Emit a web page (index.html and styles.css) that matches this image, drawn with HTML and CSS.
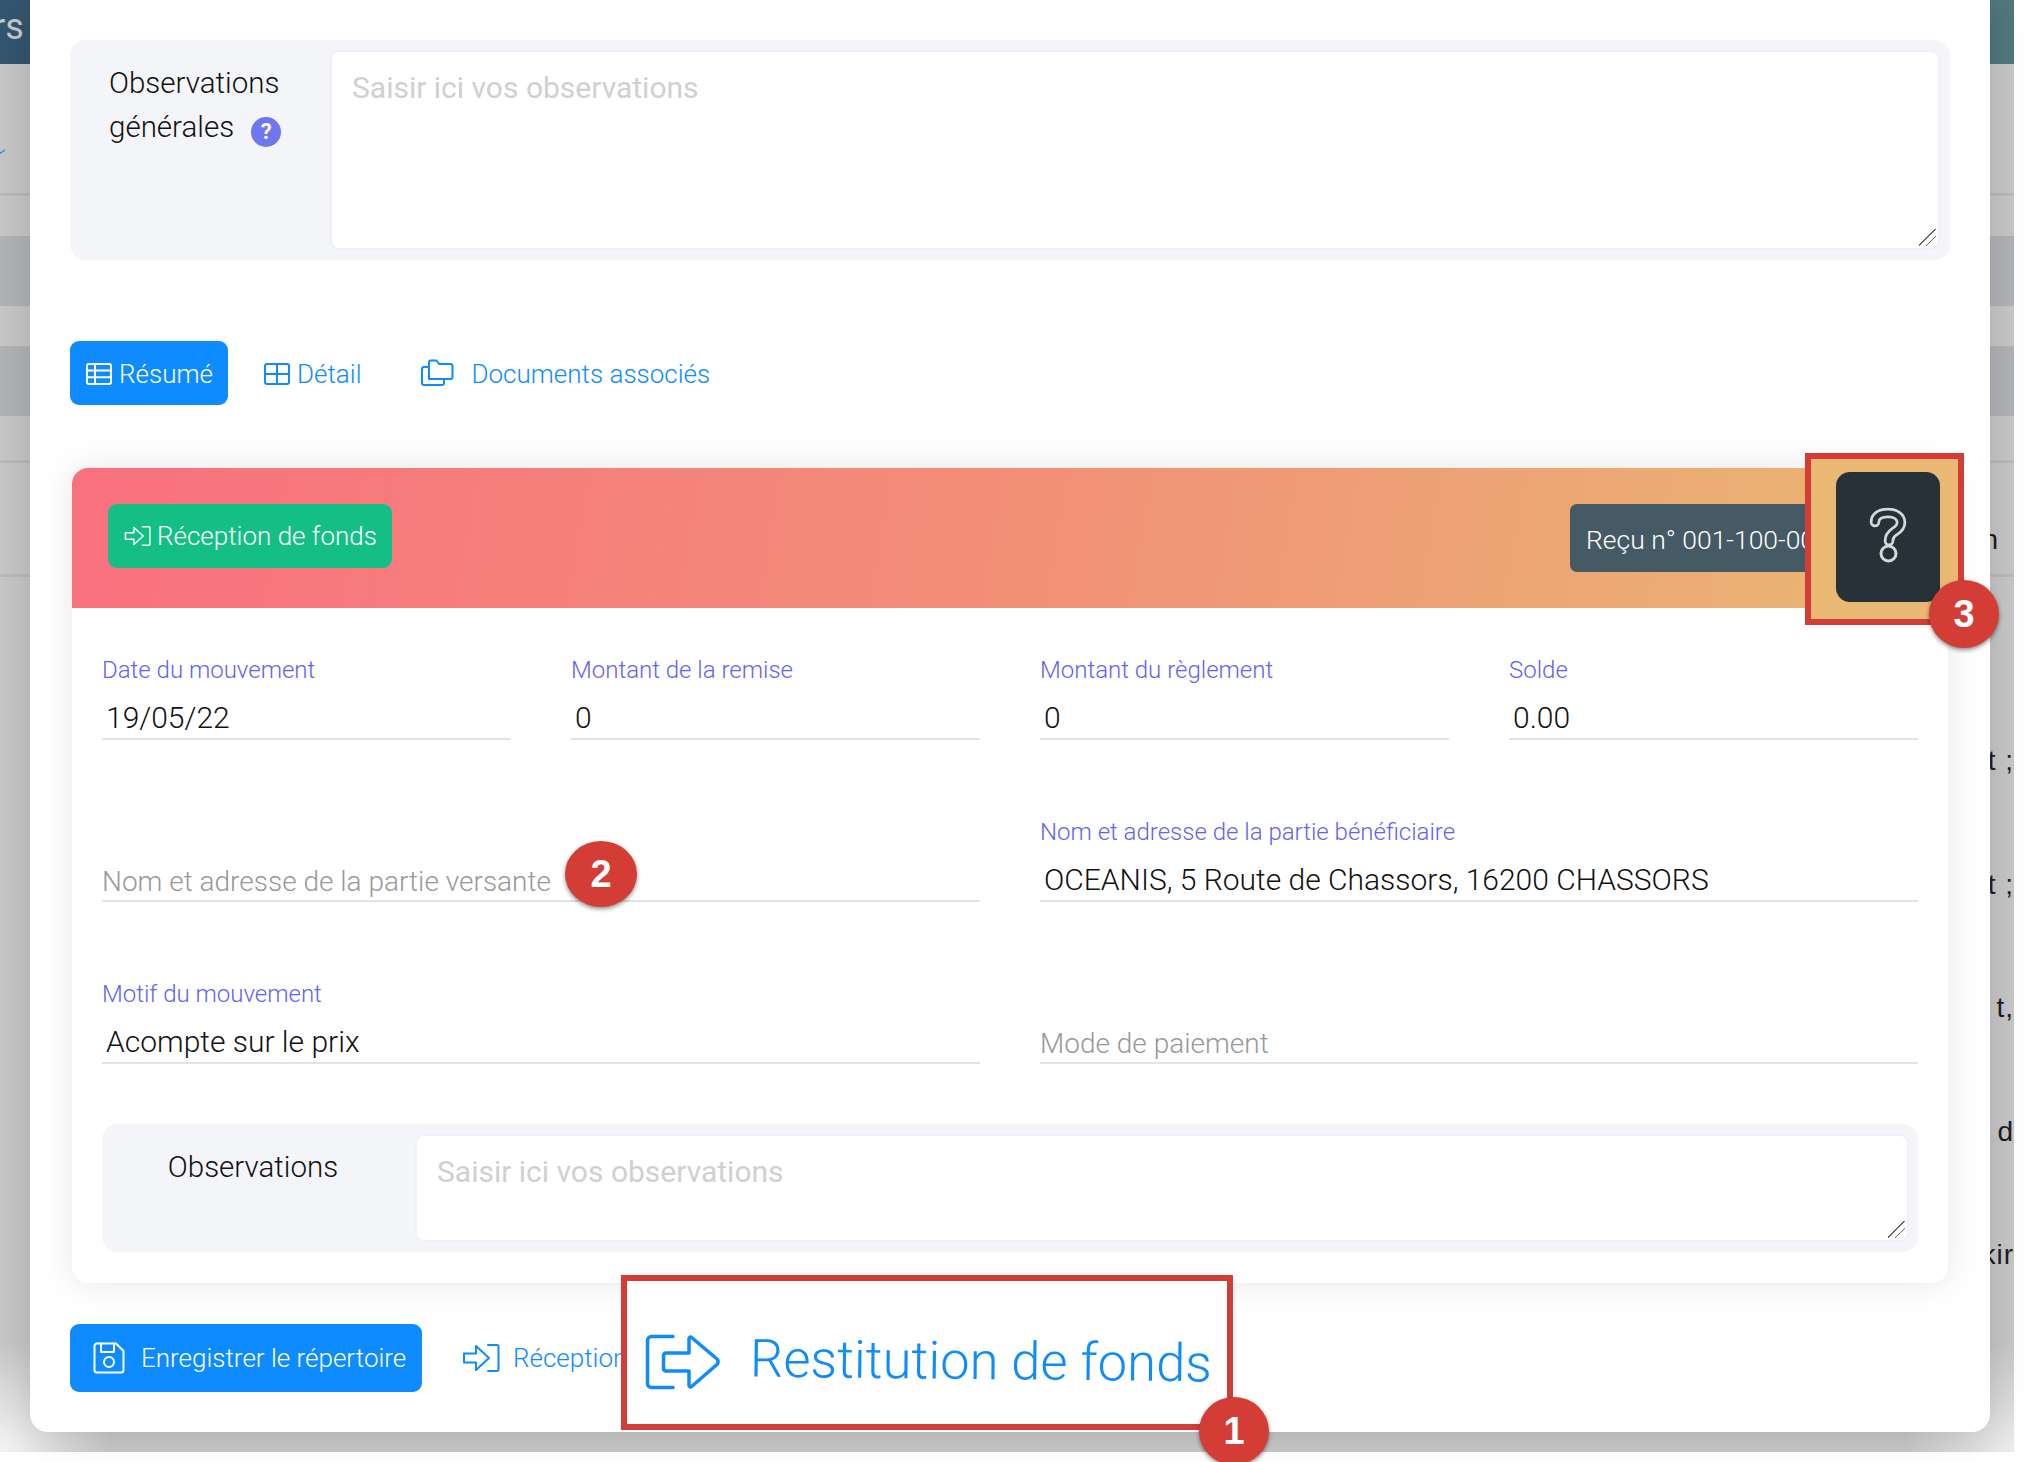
FILE: index.html
```html
<!DOCTYPE html>
<html lang="fr">
<head>
<meta charset="utf-8">
<title>Répertoire</title>
<link rel="stylesheet" href="styles.css">
</head>
<body>
<div class="backdrop">
  <div class="bg-header"><span class="bg-header-text">rs T</span></div>
  <div class="bg-row bg-row-a"><svg class="bg-check" width="8" height="8" viewBox="0 0 8 8"><path d="M0 5 L6 1" fill="none" stroke="#2c8fe8" stroke-width="1.5"/></svg></div>
  <div class="bg-row bg-row-b"></div>
  <div class="bg-row bg-row-dark"></div>
  <div class="bg-row bg-row-b"></div>
  <div class="bg-row bg-row-dark"></div>
  <div class="bg-row bg-row-c"></div>
  <div class="bg-row bg-row-d"><span class="bg-frag">n</span></div>
  <div class="bg-lines">
    <span class="bg-line">t ;</span>
    <span class="bg-line">t ;</span>
    <span class="bg-line">t,</span>
    <span class="bg-line">n d</span>
    <span class="bg-line">kir</span>
  </div>
  <div class="bg-fade"></div>
</div>

<main class="modal">
  <section class="obs obs-general">
    <div class="obs-label">Observations<br>générales <span class="help">?</span></div>
    <div class="ta ta-general">Saisir ici vos observations</div>
  </section>

  <nav class="tabs">
    <a class="tab tab-active">
      <svg class="ic ic-table" viewBox="0 0 26 22"><rect x="1" y="1" width="24" height="20" rx="2"/><path d="M1 7.600H25M1 14.300H25M9 1V21"/></svg>Résumé
    </a>
    <a class="tab tab-detail">
      <svg class="ic ic-table" viewBox="0 0 26 22"><rect x="1" y="1" width="24" height="20" rx="2"/><path d="M1 11H25M13 1V21"/></svg>Détail
    </a>
    <a class="tab tab-docs">
      <svg class="ic ic-docs" viewBox="0 0 33 27"><path d="M8 20V3.500a2 2 0 0 1 2-2h5.500l2.500 3.500h11.500a2 2 0 0 1 2 2V18a2 2 0 0 1-2 2Z"/><path d="M8 8H3a2 2 0 0 0-2 2V24a2 2 0 0 0 2 2H21a2 2 0 0 0 2-2V20"/></svg>Documents associés
    </a>
  </nav>

  <article class="card">
    <header class="card-head">
      <a class="btn-green">
        <svg class="ic ic-in-sm" viewBox="0 0 38 30"><path d="M2 10.500H14V3L27 15 14 27V19.500H2Z"/><path d="M26 2H35a1.500 1.500 0 0 1 1.500 1.500V26.500A1.500 1.500 0 0 1 35 28H26"/></svg>Réception de fonds
      </a>
      <a class="btn-receipt">Reçu n° 001-100-0001</a>
      <div class="callout callout-help">
        <div class="btn-dark">
          <svg class="ic-q" viewBox="0 0 40 56">
            <path class="q-out" d="M7 15C7 9 12 6 20 6 28 6 33 10 33 15.500 33 21 29 23 26 25 23 27 21 29 21 34"/>
            <path class="q-in" d="M7 15C7 9 12 6 20 6 28 6 33 10 33 15.500 33 21 29 23 26 25 23 27 21 29 21 34"/>
            <circle class="q-dot" cx="20.500" cy="46.500" r="7.500"/>
          </svg>
        </div>
        <span class="badge badge-3">3</span>
      </div>
    </header>

    <div class="card-body">
      <div class="grid grid-4">
        <div class="field"><label class="f-label">Date du mouvement</label><div class="f-value">19/05/22</div></div>
        <div class="field"><label class="f-label">Montant de la remise</label><div class="f-value">0</div></div>
        <div class="field"><label class="f-label">Montant du règlement</label><div class="f-value">0</div></div>
        <div class="field"><label class="f-label">Solde</label><div class="f-value">0.00</div></div>
      </div>
      <div class="grid grid-2">
        <div class="field field-empty"><div class="f-value f-ph">Nom et adresse de la partie versante</div><span class="badge badge-2">2</span></div>
        <div class="field"><label class="f-label">Nom et adresse de la partie bénéficiaire</label><div class="f-value">OCEANIS, 5 Route de Chassors, 16200 CHASSORS</div></div>
      </div>
      <div class="grid grid-2">
        <div class="field"><label class="f-label">Motif du mouvement</label><div class="f-value">Acompte sur le prix</div></div>
        <div class="field field-empty"><div class="f-value f-ph">Mode de paiement</div></div>
      </div>
      <section class="obs obs-card">
        <div class="obs-label obs-label-card">Observations</div>
        <div class="ta ta-card">Saisir ici vos observations</div>
      </section>
    </div>
  </article>

  <footer class="foot">
    <a class="btn-save">
      <svg class="ic ic-save" viewBox="0 0 32 32"><path d="M3 1.500H23L30.500 9V28A2.500 2.500 0 0 1 28 30.500H4A2.500 2.500 0 0 1 1.500 28V4A2.500 2.500 0 0 1 3 1.500Z"/><path d="M8 1.500V10H21V1.500"/><circle cx="16" cy="20" r="5"/></svg>Enregistrer le répertoire
    </a>
    <a class="foot-link">
      <svg class="ic ic-in" viewBox="0 0 38 30"><path d="M2 10.500H14V3L27 15 14 27V19.500H2Z"/><path d="M26 2H35a1.500 1.500 0 0 1 1.500 1.500V26.500A1.500 1.500 0 0 1 35 28H26"/></svg>Réception de fonds
    </a>
    <div class="callout callout-rest">
      <svg class="ic ic-out" viewBox="0 0 76 56"><path d="M28 2.500H6.500a4 4 0 0 0-4 4V49.500a4 4 0 0 0 4 4H28"/><path d="M21 19H44V4.500a1.500 1.500 0 0 1 2.600-1L72 25a4 4 0 0 1 0 5.500L46.600 52.500a1.500 1.500 0 0 1-2.600-1V37H21a2.500 2.500 0 0 1-2.500-2.500V21.500A2.500 2.500 0 0 1 21 19Z"/></svg>
      <span class="rest-text">Restitution de fonds</span>
      <span class="badge badge-1">1</span>
    </div>
  </footer>
</main>
</body>
</html>
```

FILE: styles.css
```css
* { box-sizing: border-box; }
html, body { margin: 0; padding: 0; background: #fff; }
body { width: 2038px; height: 1462px; overflow: hidden; position: relative; font-family: Roboto, "Liberation Sans", sans-serif; color: #212529; }

/* Dimmed page behind the modal */
.backdrop { width: 2014px; height: 1452px; background: #c6c6c6; position: relative; overflow: hidden; display: flex; flex-direction: column; }
.bg-header { height: 64px; flex: none; background: linear-gradient(90deg, #34556f, #50787a); color: #c3cbd1; font-size: 36px; line-height: 54px; white-space: nowrap; }
.bg-header-text { display: block; margin-left: -7px; word-spacing: -2px; }
.bg-row { flex: none; position: relative; }
.bg-row-a { height: 132px; border-bottom: 3px solid #b9b9b9; }
.bg-row-b { height: 40px; }
.bg-row-dark { height: 70px; background: #b0b2b6; }
.bg-row-c { height: 47px; border-bottom: 3px solid #b9b9b9; }
.bg-row-d { height: 114px; border-bottom: 3px solid #b9b9b9; }
.bg-check { position: absolute; left: -1px; top: 85px; }
.bg-frag { position: absolute; right: 16px; top: 63px; font: 28px/1 "Liberation Sans", sans-serif; color: #1d1d1d; }
.bg-lines { display: flex; flex-direction: column; align-items: flex-end; padding-top: 168px; }
.bg-line { height: 123.500px; font: 28px/32px "Liberation Sans", sans-serif; letter-spacing: 1px; color: #1d1d1d; white-space: nowrap; }
.bg-fade { position: absolute; inset: 0; background: radial-gradient(circle at 0 100%, #f4f4f4 0, rgba(244,244,244,0) 110px), radial-gradient(circle at 100% 100%, #ececec 0, rgba(236,236,236,0) 110px); }

/* Modal */
.modal { position: absolute; left: 30px; top: 0; width: 1960px; height: 1432px; background: #fff; border-radius: 0 0 18px 18px; padding: 40px; box-shadow: 0 0 36px rgba(0,0,0,.14); }

.obs { background: #f4f5f8; border-radius: 16px; display: flex; }
.obs-general { height: 220px; padding: 10px 10px 10px 39px; }
.obs-label { font-size: 29.500px; font-weight: 300; line-height: 44px; color: #111; flex: none; width: 221px; padding-top: 11px; white-space: nowrap; }
.help { display: inline-block; width: 30px; height: 30px; border-radius: 50%; background: #6f76ee; color: #fff; font: 700 22px/30px Roboto, sans-serif; text-align: center; margin-left: 10px; vertical-align: -2px; }
.ta { flex: 1; position: relative; background: #fff; border: 2px solid #eff0fc; border-radius: 9px; color: #d0d0d0; font-size: 30px; font-weight: 400; line-height: 36px; padding: 18px 20px; overflow: hidden; }
.ta::after { content: ""; position: absolute; right: 2px; bottom: 2px; width: 17px; height: 17px; background: linear-gradient(135deg, transparent 0 46%, #666 46% 51%, transparent 51% 68%, #666 68% 73%, transparent 73%); }
.obs-card { margin-top: 60px; height: 128px; padding: 10px 9px 10px 0; }
.obs-label-card { width: 302px; margin-right: 10px; text-align: center; padding: 0; margin-top: 11px; }
.ta-card { padding: 18px 20px; margin-left: 1px; }

.tabs { display: flex; align-items: center; height: 64px; margin-top: 81px; font-size: 26px; font-weight: 300; color: #0d8bff; }
.tab { display: flex; align-items: center; height: 64px; padding-top: 1px; white-space: nowrap; }
.tab-active { width: 158px; padding-left: 16px; background: #0d8bff; color: #fff; border-radius: 9px; }
.tab-detail { margin-left: 36px; }
.tab-docs { margin-left: 60px; }
.ic { fill: none; stroke: currentColor; stroke-width: 2; stroke-linejoin: round; stroke-linecap: round; flex: none; }
.ic-table { width: 26px; height: 22px; margin-right: 7px; }
.ic-docs { width: 33px; height: 27px; margin-right: 17px; margin-top: -3px; }

.card { margin: 63px 2px 0; height: 815px; background: #fff; border-radius: 16px; box-shadow: 0 0 34px rgba(0,0,0,.1); }
.card-head { height: 140px; position: relative; border-radius: 16px 16px 0 0; background: linear-gradient(100deg, #f9707f 0%, #f28f77 50%, #e9b873 100%); display: flex; padding: 36px 36px 0; align-items: flex-start; justify-content: space-between; }
.btn-green { display: flex; align-items: center; width: 284px; height: 64px; padding-left: 16px; background: #13bf85; color: #fff; border-radius: 9px; font-size: 26px; font-weight: 300; white-space: nowrap; }
.ic-in-sm { width: 27px; height: 24px; margin-right: 6px; }
.btn-receipt { width: 349px; height: 68px; margin-right: -7px; background: #465a65; border-radius: 7px; color: #fff; font-size: 26.500px; font-weight: 300; line-height: 72px; padding-left: 16px; white-space: nowrap; overflow: hidden; }

.callout { position: absolute; border: 6px solid #d43d36; }
.callout-help { left: 1733px; top: -15px; width: 159px; height: 172px; background: #e9b873; padding: 13px 0 0 25px; }
.btn-dark { width: 104px; height: 130px; background: #263238; border-radius: 14px; display: flex; align-items: center; justify-content: center; }
.ic-q { width: 40px; height: 56px; margin-top: -5px; overflow: visible; }
.q-out { fill: none; stroke: #d5d8d9; stroke-width: 10.500; stroke-linecap: round; }
.q-in { fill: none; stroke: #263238; stroke-width: 5; stroke-linecap: round; }
.q-dot { fill: #263238; stroke: #d5d8d9; stroke-width: 3; }

.badge { position: absolute; display: flex; align-items: center; justify-content: center; background: #d43d36; color: #fff; border-radius: 50%; box-shadow: 0 2px 4px rgba(0,0,0,.45); font: 700 38px/1 "Liberation Sans", sans-serif; width: 70px; height: 68px; }
.badge-1 { left: 572px; top: 116px; }
.badge-2 { left: 463px; top: 24px; width: 72px; height: 66px; }
.badge-3 { left: 118px; top: 121px; }

.card-body { padding: 47px 30px 0; }
.grid { display: grid; column-gap: 60px; }
.grid + .grid { margin-top: 77px; }
.grid-4 { grid-template-columns: repeat(4, 409px); }
.grid-2 { grid-template-columns: repeat(2, 878px); }
.field { height: 85px; display: flex; flex-direction: column; justify-content: flex-end; position: relative; border-bottom: 2px solid #e2e3e5; }
.f-label { font-size: 24px; font-weight: 300; color: #5f63f5; line-height: 30px; margin-bottom: 13px; white-space: nowrap; }
.f-value { font-size: 30px; font-weight: 300; line-height: 40px; color: #111; padding-left: 4px; white-space: nowrap; }
.f-ph { color: #999; font-size: 28px; padding-left: 0; line-height: 37px; }

.foot { display: flex; align-items: center; height: 68px; margin-top: 41px; position: relative; font-size: 26px; font-weight: 300; }
.btn-save { display: flex; align-items: center; width: 352px; height: 68px; padding-left: 23px; background: #0d8bff; color: #fff; border-radius: 9px; white-space: nowrap; }
.ic-save { width: 32px; height: 32px; margin-right: 16px; }
.foot-link { display: flex; align-items: center; margin-left: 40px; color: #0d8bff; white-space: nowrap; }
.ic-in { width: 38px; height: 30px; margin-right: 13px; }
.callout-rest { left: 551px; top: -49px; width: 612px; height: 155px; background: #fff; display: flex; align-items: center; color: #0d8bff; padding: 18px 0 0 18px; }
.ic-out { width: 76px; height: 56px; stroke-width: 3.500; margin-right: 29px; }
.rest-text { font-size: 52.500px; font-weight: 350; line-height: 1; white-space: nowrap; transform: rotate(.6deg); }
```
